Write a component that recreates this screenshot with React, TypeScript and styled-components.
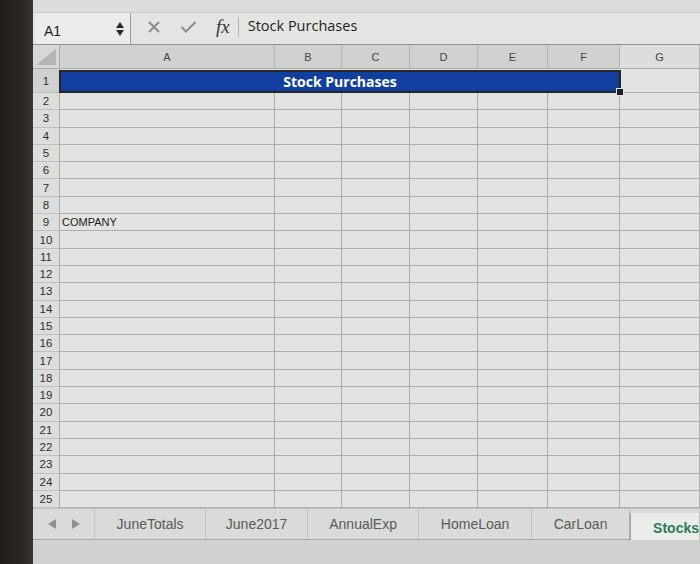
import * as React from "react";
import styled, { createGlobalStyle } from "styled-components";

const GlobalStyle = createGlobalStyle`
  html, body {
    margin: 0;
    padding: 0;
    background: #e2e4e1;
    overflow: hidden;
  }
  #root {
    width: 700px;
    height: 564px;
  }
`;

const Frame = styled.div`
  display: flex;
  width: 700px;
  height: 564px;
  font-family: "Liberation Sans", Arial, sans-serif;
`;

const Bezel = styled.div`
  width: 33px;
  flex: none;
  background: linear-gradient(90deg, #1f1c1a 0%, #2b2826 70%, #3a3835 100%);
`;

const Screen = styled.div`
  flex: 1;
  display: flex;
  flex-direction: column;
  background: #e2e4e1;
  min-width: 0;
`;

const TopStrip = styled.div`
  height: 12px;
  background: #dcdedb;
  border-bottom: 1px solid #c9cbc8;
`;

const FormulaBar = styled.div`
  height: 31px;
  display: flex;
  align-items: stretch;
  background: #e4e5e2;
  border-bottom: 1px solid #8f918e;
`;

const NameBox = styled.div`
  width: 95px;
  margin-left: 3px;
  display: flex;
  align-items: center;
  justify-content: space-between;
  padding: 4px 6px 0 8px;
  box-sizing: border-box;
  background: #ebecea;
  border-right: 1px solid #9a9c99;
  font-size: 14px;
  color: #222;
`;

const Spinner = styled.div`
  display: flex;
  flex-direction: column;
  align-items: center;
  gap: 2px;
  margin-top: -4px;
`;

const Tools = styled.div`
  display: flex;
  align-items: center;
  gap: 19px;
  padding-left: 16px;
  margin-top: -3px;
`;

const Fx = styled.span`
  font-family: "Liberation Serif", "Times New Roman", serif;
  font-style: italic;
  font-size: 19px;
  color: #333;
  padding-right: 8px;
  border-right: 1px solid #b0b2af;
  line-height: 20px;
`;

const FormulaText = styled.span`
  display: flex;
  align-items: center;
  padding-left: 9px;
  font-family: "Open Sans", sans-serif;
  font-size: 14.5px;
  color: #1e1e1e;
  margin-top: -7px;
`;

const Sheet = styled.div`
  display: grid;
  grid-template-columns: 27px 215px 67px 68px 68px 70px 72px 1fr;
  grid-template-rows: 24px 24px repeat(24, 17.3px);
  background: #e2e4e1;
`;

const Corner = styled.div`
  background: #d6d8d5;
  border-right: 1px solid #a9aba8;
  border-bottom: 1px solid #a9aba8;
  display: flex;
  align-items: flex-end;
  justify-content: flex-end;
  padding: 0 3px 3px 0;
`;

const ColHead = styled.div<{ $selected?: boolean }>`
  background: ${(p) => (p.$selected ? "#cfd2ce" : "#dcdedb")};
  border-right: 1px solid #b3b5b2;
  border-bottom: 1px solid #a9aba8;
  display: flex;
  align-items: center;
  justify-content: center;
  font-size: 11px;
  color: #444;
`;

const RowHead = styled.div<{ $selected?: boolean }>`
  background: ${(p) => (p.$selected ? "#cfd2ce" : "#dcdedb")};
  border-right: 1px solid #a9aba8;
  border-bottom: 1px solid #bfc1be;
  display: flex;
  align-items: center;
  justify-content: center;
  font-size: 11.5px;
  color: #2e2e2e;
`;

const Cell = styled.div`
  border-right: 1px solid #adafac;
  border-bottom: 1px solid #adafac;
  font-size: 11px;
  color: #1a1a1a;
  display: flex;
  align-items: center;
  padding-left: 2px;
  white-space: nowrap;
`;

const TitleCell = styled.div`
  grid-column: 2 / 8;
  position: relative;
  background: #123f9f;
  border: 1px solid #fff;
  outline: 2px solid #262626;
  outline-offset: -1px;
  margin: 2px 0 1px;
  display: flex;
  align-items: center;
  justify-content: center;
  color: #fff;
  font-family: "Open Sans", sans-serif;
  font-weight: 700;
  font-size: 14px;
`;

const Handle = styled.span`
  position: absolute;
  right: -5px;
  bottom: -5px;
  width: 6px;
  height: 6px;
  background: #1e1e1e;
  border: 1px solid #e2e4e1;
`;

const TabBar = styled.div`
  height: 30px;
  display: flex;
  align-items: stretch;
  background: #d9dbd8;
  border-top: 1px solid #c2c4c1;
  border-bottom: 1px solid #a7a9a6;
`;

const Nav = styled.div`
  width: 67px;
  display: flex;
  align-items: center;
  justify-content: center;
  gap: 16px;
  border-right: 1px solid #c0c2bf;
`;

const Tab = styled.div<{ $active?: boolean; $w: number }>`
  width: ${(p) => p.$w}px;
  flex: none;
  display: flex;
  align-items: center;
  justify-content: center;
  font-size: 14px;
  color: ${(p) => (p.$active ? "#2f7a56" : "#5a5a5a")};
  font-weight: ${(p) => (p.$active ? 700 : 400)};
  background: ${(p) => (p.$active ? "#eaece9" : "transparent")};
  border-right: 1px solid #c0c2bf;
  ${(p) =>
    p.$active &&
    `
    margin-top: 4px;
    margin-bottom: -3px;
    border-left: 1px solid #a4a6a3;
    box-shadow: 0 1px 2px rgba(0,0,0,0.25);
    justify-content: flex-start;
    padding-left: 22px;
    flex: 1;
  `}
`;

const BottomStrip = styled.div`
  flex: 1;
  background: #d0d2cf;
`;

const cols = ["A", "B", "C", "D", "E", "F", "G"];
const tabs: [string, number][] = [
  ["JuneTotals", 110],
  ["June2017", 101],
  ["AnnualExp", 110],
  ["HomeLoan", 112],
  ["CarLoan", 97],
];

const Triangle = () => (
  <svg width="20" height="16" viewBox="0 0 20 16">
    <polygon points="20,0 20,16 0,16" fill="#b4b6b3" />
  </svg>
);

const Arrow = ({ up }: { up?: boolean }) => (
  <svg width="8" height="6" viewBox="0 0 8 6">
    <polygon points={up ? "4,0 8,6 0,6" : "0,0 8,0 4,6"} fill="#2a2a2a" />
  </svg>
);

const App = () => {
  const rows = Array.from({ length: 24 }, (_, i) => i + 2);
  return (
    <>
      <GlobalStyle />
      <Frame>
        <Bezel />
        <Screen>
          <TopStrip />
          <FormulaBar>
            <NameBox>
              <span>A1</span>
              <Spinner>
                <Arrow up />
                <Arrow />
              </Spinner>
            </NameBox>
            <Tools>
              <svg width="14" height="14" viewBox="0 0 14 14">
                <path d="M2 2 L12 12 M12 2 L2 12" stroke="#8a8c89" strokeWidth="2" />
              </svg>
              <svg width="17" height="14" viewBox="0 0 17 14">
                <path d="M1.5 7 L6 11.5 L15.5 2" stroke="#8a8c89" strokeWidth="2" fill="none" />
              </svg>
              <Fx>fx</Fx>
            </Tools>
            <FormulaText>Stock Purchases</FormulaText>
          </FormulaBar>
          <Sheet>
            <Corner>
              <Triangle />
            </Corner>
            {cols.map((c) => (
              <ColHead key={c} $selected={c !== "G"}>
                {c}
              </ColHead>
            ))}
            <RowHead $selected>1</RowHead>
            <TitleCell>
              Stock Purchases
              <Handle />
            </TitleCell>
            <Cell />
            {rows.map((r) => (
              <React.Fragment key={r}>
                <RowHead>{r}</RowHead>
                {cols.map((c) => (
                  <Cell key={c}>{r === 9 && c === "A" ? "COMPANY" : ""}</Cell>
                ))}
              </React.Fragment>
            ))}
          </Sheet>
          <TabBar>
            <Nav>
              <svg width="8" height="10" viewBox="0 0 8 10">
                <polygon points="8,0 8,10 0,5" fill="#8e908d" />
              </svg>
              <svg width="8" height="10" viewBox="0 0 8 10">
                <polygon points="0,0 0,10 8,5" fill="#8e908d" />
              </svg>
            </Nav>
            {tabs.map(([t, w]) => (
              <Tab key={t} $w={w}>
                {t}
              </Tab>
            ))}
            <Tab $active $w={70}>
              Stocks
            </Tab>
          </TabBar>
          <BottomStrip />
        </Screen>
      </Frame>
    </>
  );
};

export default App;
